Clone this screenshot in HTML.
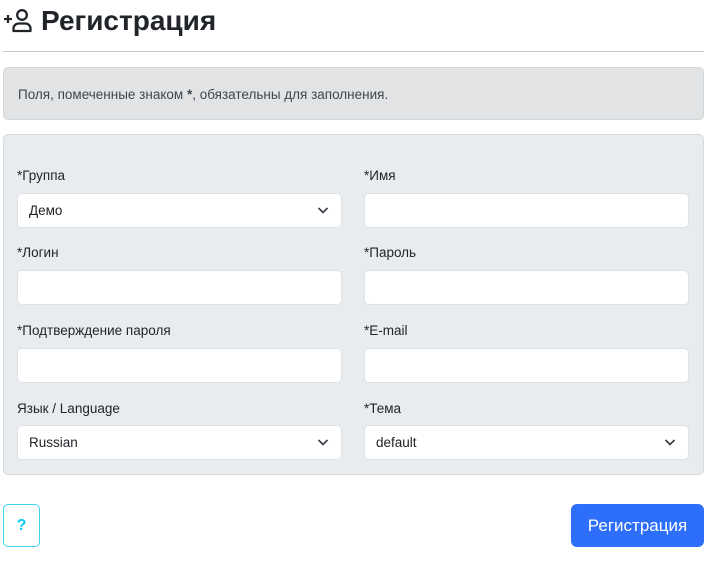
<!DOCTYPE html>
<html><head><meta charset="utf-8"><style>
*{box-sizing:border-box;margin:0;padding:0}
body{width:710px;height:561px;background:#fff;font-family:"Liberation Sans",sans-serif;color:#212529;position:relative;overflow:hidden}
.abs{position:absolute}
h1{position:absolute;left:3px;top:2px;font-size:28px;font-weight:bold;line-height:38px;color:#212529}
.hr{left:3px;top:51px;width:701px;height:1px;background:#ccc}
.alert{left:3px;top:67px;width:701px;height:53px;background:#e2e3e5;border:1px solid #d3d6d8;border-radius:5px;font-size:13.5px;padding:0 14px;line-height:53px;color:#41464b}
.panel{left:3px;top:134px;width:701px;height:341px;background:#e9ecef;border:1px solid #d6d9dc;border-radius:5px}
.lbl{font-size:13.5px;color:#212529}
.inp{width:325px;height:35px;background:#fff;border:1px solid #dee2e6;border-radius:5px;font-size:13.5px;padding:0 11px;line-height:33px}
.chev{position:absolute;right:12px;top:11px}
.help{left:3px;top:504px;width:37px;height:43px;border:1px solid #3dd5f3;border-radius:5px;color:#0dcaf0;font-weight:bold;font-size:16px;text-align:center;line-height:41px}
.btn{left:571px;top:504px;width:133px;height:43px;background:#2d6ffb;border-radius:6px;color:#fff;font-size:17px;text-align:center;line-height:43px}
</style></head><body>
<h1><svg width="30" height="26" viewBox="0 0 30 26" style="vertical-align:-3px;margin-right:8px"><path d="M1 12h8M5 8v8" stroke="#212529" stroke-width="2.2" fill="none"/><circle cx="19" cy="8" r="4.8" stroke="#212529" stroke-width="2.3" fill="none"/><path d="M10.5 24v-2.5c0-3 2.5-5 5.5-5h6c3 0 5.5 2 5.5 5V24z" stroke="#212529" stroke-width="2.3" fill="none" stroke-linejoin="round"/></svg>Регистрация</h1>
<div class="abs hr"></div>
<div class="abs alert">Поля, помеченные знаком <b>*</b>, обязательны для заполнения.</div>
<div class="abs panel"></div>
<div class="abs lbl" style="left:17px;top:168px">*Группа</div>
<div class="abs inp" style="left:17px;top:193px">Демо<svg class="chev" width="12" height="10" viewBox="0 0 12 10"><path d="M1.5 3l4.5 4.5L10.5 3" stroke="#343a40" stroke-width="1.6" fill="none"/></svg></div>
<div class="abs lbl" style="left:364px;top:168px">*Имя</div>
<div class="abs inp" style="left:364px;top:193px"></div>
<div class="abs lbl" style="left:17px;top:245px">*Логин</div>
<div class="abs inp" style="left:17px;top:270px"></div>
<div class="abs lbl" style="left:364px;top:245px">*Пароль</div>
<div class="abs inp" style="left:364px;top:270px"></div>
<div class="abs lbl" style="left:17px;top:323px">*Подтверждение пароля</div>
<div class="abs inp" style="left:17px;top:348px"></div>
<div class="abs lbl" style="left:364px;top:323px">*E-mail</div>
<div class="abs inp" style="left:364px;top:348px"></div>
<div class="abs lbl" style="left:17px;top:401px">Язык / Language</div>
<div class="abs inp" style="left:17px;top:425px">Russian<svg class="chev" width="12" height="10" viewBox="0 0 12 10"><path d="M1.5 3l4.5 4.5L10.5 3" stroke="#343a40" stroke-width="1.6" fill="none"/></svg></div>
<div class="abs lbl" style="left:364px;top:401px">*Тема</div>
<div class="abs inp" style="left:364px;top:425px">default<svg class="chev" width="12" height="10" viewBox="0 0 12 10"><path d="M1.5 3l4.5 4.5L10.5 3" stroke="#343a40" stroke-width="1.6" fill="none"/></svg></div>
<div class="abs help">?</div>
<div class="abs btn">Регистрация</div>
</body></html>
